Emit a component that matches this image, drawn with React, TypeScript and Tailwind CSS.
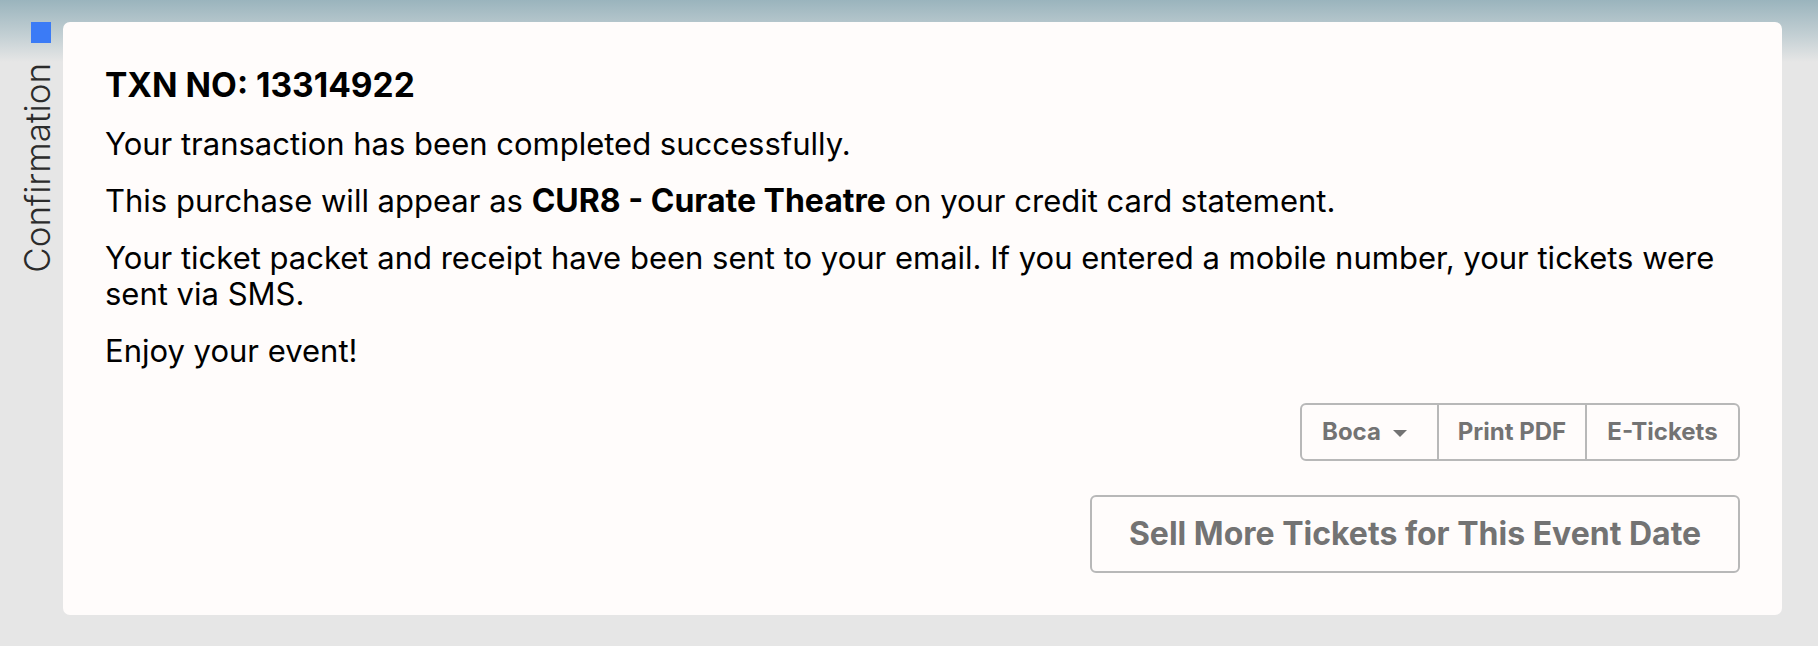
export default function App() {
  return (
    <div className="flex h-[646px] w-full bg-[linear-gradient(to_bottom,#9ab4bd_0px,#c4d0d4_36px,#e6e6e6_62px)] pt-[22px] pr-[36px] font-['Inter',sans-serif]">
      <div className="flex w-[51px] shrink-0 flex-col items-end">
        <div className="h-[21px] w-[20px] bg-[#3b7bf6]" />
        <div className="mt-[20px] mr-[-4px] rotate-180 text-[35px] font-light leading-none text-[#2b2b2b] [writing-mode:vertical-rl]">
          Confirmation
        </div>
      </div>

      <div className="ml-[12px] flex h-[593px] flex-1 flex-col rounded-[7px] bg-[#fffcfb] p-[42px] pt-[43px]">
        <h1 className="text-[33.5px] font-bold leading-[40px] text-black">TXN NO: 13314922</h1>

        <div className="mt-[21px] flex flex-col gap-[21px] text-[31px] leading-[36px] text-black">
          <p>Your transaction has been completed successfully.</p>
          <p>
            This purchase will appear as <span className="text-[32px] font-bold">CUR8 - Curate Theatre</span> on your
            credit card statement.
          </p>
          <p>
            Your ticket packet and receipt have been sent to your email. If you entered a mobile number, your tickets
            were sent via SMS.
          </p>
          <p>Enjoy your event!</p>
        </div>

        <div className="mt-[34px] flex justify-end">
          <div className="flex h-[58px] overflow-hidden rounded-[6px] border-2 border-[#b8b8b8] text-[24px] font-bold text-[#737373]">
            <button className="flex w-[135px] items-center gap-[12px] pl-[20px]">
              Boca
              <span className="mt-[2px] h-0 w-0 border-x-[7px] border-t-[7px] border-x-transparent border-t-[#737373]" />
            </button>
            <button className="w-[148px] border-l-2 border-[#b8b8b8]">Print PDF</button>
            <button className="w-[153px] border-l-2 border-[#b8b8b8]">E-Tickets</button>
          </div>
        </div>

        <div className="mt-[34px] flex justify-end">
          <button className="h-[78px] w-[650px] rounded-[6px] border-2 border-[#b8b8b8] text-[32px] font-bold text-[#737373]">
            Sell More Tickets for This Event Date
          </button>
        </div>
      </div>
    </div>
  );
}
